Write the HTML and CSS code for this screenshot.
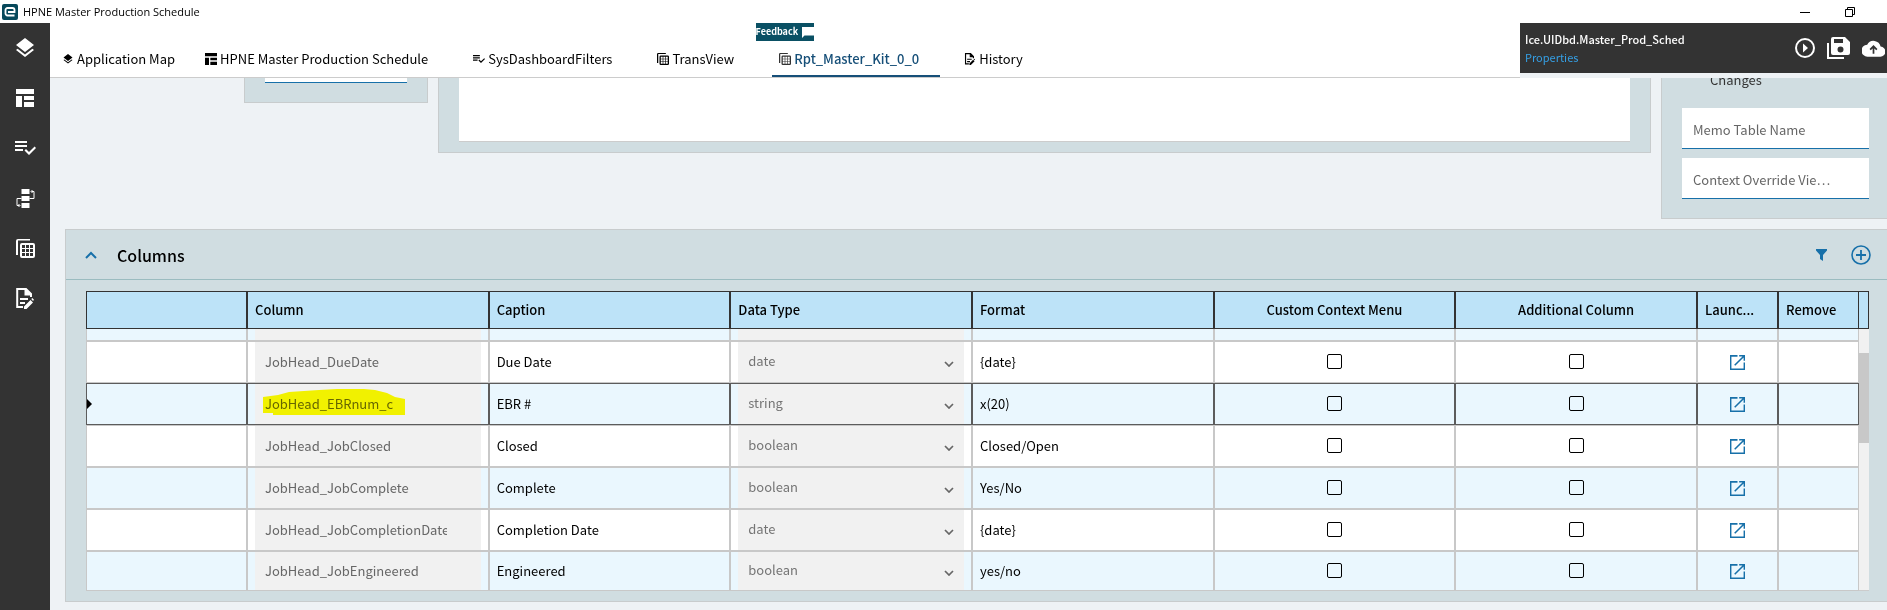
FILE: index.html
```html
<!DOCTYPE html>
<html lang="en">
<head>
<meta charset="utf-8">
<title>HPNE Master Production Schedule</title>
<link rel="stylesheet" href="styles.css">
</head>
<body>
<svg class="sprite" aria-hidden="true">
  <symbol id="i-layers" viewBox="0 0 24 24"><path d="M12 18.54l-7.37-5.73L3 14.07l9 7 9-7-1.63-1.27zM12 16l9-7-9-7-9 7z"/></symbol>
  <symbol id="i-layout" viewBox="0 0 18 18"><path d="M0 0h18v5H0zM0 7h6v11H0zM8 7h10v4H8zM8 13h10v5H8z"/></symbol>
  <symbol id="i-check-list" viewBox="0 0 21 14"><path d="M0 0h12v2H0zM0 4h12v2H0zM0 8h8v2H0zM19.600 5.500L21 7l-7 7-4.500-4.500L11 8l3 3z"/></symbol>
  <symbol id="i-flow" viewBox="0 0 18 19"><path d="M5 0h8v5H5zM5 7h8v5H5zM5 14h8v5H5z"/><path d="M13 9.500h4.500V2.500H15M16 1l-1.500 1.500L16 4M5 9.500H.500v7H3M2 15l1.500 1.500L2 18" fill="none" stroke="currentColor"/></symbol>
  <symbol id="i-grid" viewBox="0 0 19 19"><path d="M0 16V2a2 2 0 0 1 2-2h12v1.500H2V16z"/><path fill-rule="evenodd" d="M6 4h11a2 2 0 0 1 2 2v11a2 2 0 0 1-2 2H6a2 2 0 0 1-2-2V6a2 2 0 0 1 2-2zM6 6v3h3V6zM10 6v3h3V6zM14 6v3h3V6zM6 10v3h3v-3zM10 10v3h3v-3zM14 10v3h3v-3zM6 14v3h3v-3zM10 14v3h3v-3zM14 14v3h3v-3z"/></symbol>
  <symbol id="i-history" viewBox="0 0 18 21"><path d="M7 19H1.200V1H10l5 5v3M9.500 1v5.500H15" fill="none" stroke="currentColor" stroke-width="2"/><path d="M10 1v6h5zM4 10h8v2H4zM4 14h5v2H4zM8 21v-2.600l6.500-6.500 2.500 2.500-6.500 6.600zM15.300 11l1-1 1.700 1.700-1 1.200z"/></symbol>
  <symbol id="i-launch" viewBox="3 3 18 18"><path d="M19 19.300H4.700V5H12V3H3v18h18v-9h-1.700v7.300zM14 3v1.700h4l-10 10L9.300 16l10-10v4H21V3z"/></symbol>
  <symbol id="i-down" viewBox="0 0 10 6"><path d="M1 1l4 4 4-4" fill="none" stroke="currentColor" stroke-width="1.700"/></symbol>
</svg>

<header class="titlebar">
  <svg class="logo" viewBox="0 0 16 16" aria-hidden="true"><rect width="16" height="16" rx="2" fill="#07495b"/><path d="M12.500 11.500H5.500a2 2 0 0 1-2-2V6a2 2 0 0 1 2-2h5a2 2 0 0 1 2 2v2H6" fill="none" stroke="#fff" stroke-width="1.800"/></svg>
  <span class="titlebar-text">HPNE Master Production Schedule</span>
  <button class="window-button" aria-label="Minimize"><svg viewBox="0 0 10 10"><path d="M0 5.500h10" stroke="#000"/></svg></button>
  <button class="window-button" aria-label="Restore"><svg viewBox="0 0 10 10"><path d="M.500 2.500h7v7h-7zM2.500 2V.500h7v7H8" fill="none" stroke="#000"/></svg></button>
</header>

<div class="app">
  <nav class="sidebar" aria-label="Sections">
    <button aria-label="Application Map"><svg class="icon-xl"><use href="#i-layers"/></svg></button>
    <button aria-label="Layout"><svg class="icon-md"><use href="#i-layout"/></svg></button>
    <button aria-label="Rules"><svg class="icon-list"><use href="#i-check-list"/></svg></button>
    <button aria-label="Events"><svg class="icon-lg"><use href="#i-flow"/></svg></button>
    <button aria-label="Data views"><svg class="icon-lg"><use href="#i-grid"/></svg></button>
    <button aria-label="History"><svg class="icon-doc"><use href="#i-history"/></svg></button>
  </nav>

  <main class="main">
    <div class="topbar">
      <nav class="tabs" aria-label="Open pages">
        <a class="tab tab-first" href="#"><svg><use href="#i-layers"/></svg>Application Map</a>
        <a class="tab" href="#"><svg><use href="#i-layout"/></svg>HPNE Master Production Schedule</a>
        <a class="tab" href="#"><svg><use href="#i-check-list"/></svg>SysDashboardFilters</a>
        <a class="tab" href="#"><svg><use href="#i-grid"/></svg>TransView</a>
        <a class="tab tab-active" href="#" aria-current="page"><svg><use href="#i-grid"/></svg>Rpt_Master_Kit_0_0</a>
        <a class="tab" href="#"><svg><use href="#i-history"/></svg>History</a>
        <button class="feedback">Feedback<svg viewBox="0 0 12 11"><path d="M0 0h12v8.500H2.500L0 11z" fill="#fff"/></svg></button>
      </nav>
      <div class="layer-bar">
        <div class="layer-text">
          <span class="layer-name">Ice.UIDbd.Master_Prod_Sched</span>
          <a class="layer-link" href="#">Properties</a>
        </div>
        <button aria-label="Preview"><svg class="icon-play" viewBox="0 0 20 20"><circle cx="10" cy="10" r="9" fill="none" stroke="#fff" stroke-width="2"/><path d="M8 5.500v9l5-4.500z" fill="#fff"/></svg></button>
        <button aria-label="Save"><svg class="icon-save" viewBox="0 0 23 22"><path d="M1 6v15h16" fill="none" stroke="#fff" stroke-width="2"/><path fill="#fff" fill-rule="evenodd" d="M6 0h12l5 5v11a2 2 0 0 1-2 2H6a2 2 0 0 1-2-2V2a2 2 0 0 1 2-2zM7 2v4h9V2zM13.500 9.500a3 3 0 1 0 0 6 3 3 0 0 0 0-6z"/></svg></button>
        <button aria-label="Publish"><svg class="icon-cloud" viewBox="0 0 24 17"><path d="M19.400 6.500A7.500 7.500 0 0 0 5.400 4.500 6 6 0 0 0 6 17h13a5 5 0 0 0 .400-10.500z" fill="#fff"/><path d="M12 14V6.500M8.500 9.700L12 6.200l3.500 3.500" fill="none" stroke="#333" stroke-width="1.800"/></svg></button>
      </div>
    </div>

    <div class="content">
      <div class="upper">
        <section class="panel panel-small"><input class="field-tail" aria-label="Value"></section>
        <section class="panel panel-wide"><div class="canvas"></div></section>
        <section class="panel panel-side">
          <span class="side-label">Changes</span>
          <input class="field" value="Memo Table Name" aria-label="Memo Table Name">
          <input class="field" value="Context Override Vie…" aria-label="Context Override View">
        </section>
      </div>

      <section class="panel columns">
        <header class="columns-head">
          <button class="collapse" aria-label="Collapse"><svg viewBox="0 0 12 8"><path d="M1 7l5-5 5 5" fill="none" stroke="currentColor" stroke-width="2"/></svg></button>
          <h2>Columns</h2>
          <button class="filter" aria-label="Filter"><svg viewBox="0 0 11 12"><path d="M0 0h11v1.500L7 6v6l-3-2V6L0 1.500z" fill="currentColor"/></svg></button>
          <button class="add" aria-label="Add"><svg viewBox="0 0 20 20"><path d="M10 5v10M5 10h10" stroke="currentColor" stroke-width="1.800"/><circle cx="10" cy="10" r="9" fill="none" stroke="currentColor" stroke-width="1.600"/></svg></button>
        </header>
        <div class="grid">
          <table>
            <colgroup><col class="col-mark"><col><col><col><col><col><col><col class="col-action"><col class="col-action"></colgroup>
            <thead>
              <tr><th></th><th>Column</th><th>Caption</th><th>Data Type</th><th>Format</th><th class="center">Custom Context Menu</th><th class="center">Additional Column</th><th>Launc...</th><th>Remove</th></tr>
            </thead>
            <tbody>
              <tr class="row-cut"><td></td><td><div class="fill"></div></td><td></td><td><div class="fill"></div></td><td></td><td></td><td></td><td></td><td></td></tr>
              <tr>
                <td></td>
                <td><input class="cell-input" value="JobHead_DueDate" disabled aria-label="Column"></td>
                <td>Due Date</td>
                <td><div class="pick"><select disabled aria-label="Data Type"><option>date</option></select><svg><use href="#i-down"/></svg></div></td>
                <td>{date}</td>
                <td class="center"><input type="checkbox" aria-label="Custom Context Menu"></td>
                <td class="center"><input type="checkbox" aria-label="Additional Column"></td>
                <td class="center"><a class="launch" href="#" aria-label="Launch"><svg><use href="#i-launch"/></svg></a></td>
                <td></td>
              </tr>
              <tr class="row-selected">
                <td><svg class="marker" viewBox="0 0 5 10"><path d="M0 0l5 5-5 5z"/></svg></td>
                <td><div class="marked"><input class="cell-input" value="JobHead_EBRnum_c" disabled aria-label="Column"><svg class="highlight" viewBox="0 0 142 26"><path d="M0 8L15 6l11-3 30-2 18-1h27l11 1 12 3 8 4 10 2v16H10v-2H0z" fill="#ff0"/></svg></div></td>
                <td>EBR #</td>
                <td><div class="pick"><select disabled aria-label="Data Type"><option>string</option></select><svg><use href="#i-down"/></svg></div></td>
                <td>x(20)</td>
                <td class="center"><input type="checkbox" aria-label="Custom Context Menu"></td>
                <td class="center"><input type="checkbox" aria-label="Additional Column"></td>
                <td class="center"><a class="launch" href="#" aria-label="Launch"><svg><use href="#i-launch"/></svg></a></td>
                <td></td>
              </tr>
              <tr>
                <td></td>
                <td><input class="cell-input" value="JobHead_JobClosed" disabled aria-label="Column"></td>
                <td>Closed</td>
                <td><div class="pick"><select disabled aria-label="Data Type"><option>boolean</option></select><svg><use href="#i-down"/></svg></div></td>
                <td>Closed/Open</td>
                <td class="center"><input type="checkbox" aria-label="Custom Context Menu"></td>
                <td class="center"><input type="checkbox" aria-label="Additional Column"></td>
                <td class="center"><a class="launch" href="#" aria-label="Launch"><svg><use href="#i-launch"/></svg></a></td>
                <td></td>
              </tr>
              <tr>
                <td></td>
                <td><input class="cell-input" value="JobHead_JobComplete" disabled aria-label="Column"></td>
                <td>Complete</td>
                <td><div class="pick"><select disabled aria-label="Data Type"><option>boolean</option></select><svg><use href="#i-down"/></svg></div></td>
                <td>Yes/No</td>
                <td class="center"><input type="checkbox" aria-label="Custom Context Menu"></td>
                <td class="center"><input type="checkbox" aria-label="Additional Column"></td>
                <td class="center"><a class="launch" href="#" aria-label="Launch"><svg><use href="#i-launch"/></svg></a></td>
                <td></td>
              </tr>
              <tr>
                <td></td>
                <td><input class="cell-input" value="JobHead_JobCompletionDate" disabled aria-label="Column"></td>
                <td>Completion Date</td>
                <td><div class="pick"><select disabled aria-label="Data Type"><option>date</option></select><svg><use href="#i-down"/></svg></div></td>
                <td>{date}</td>
                <td class="center"><input type="checkbox" aria-label="Custom Context Menu"></td>
                <td class="center"><input type="checkbox" aria-label="Additional Column"></td>
                <td class="center"><a class="launch" href="#" aria-label="Launch"><svg><use href="#i-launch"/></svg></a></td>
                <td></td>
              </tr>
              <tr class="row-last">
                <td></td>
                <td><input class="cell-input" value="JobHead_JobEngineered" disabled aria-label="Column"></td>
                <td>Engineered</td>
                <td><div class="pick"><select disabled aria-label="Data Type"><option>boolean</option></select><svg><use href="#i-down"/></svg></div></td>
                <td>yes/no</td>
                <td class="center"><input type="checkbox" aria-label="Custom Context Menu"></td>
                <td class="center"><input type="checkbox" aria-label="Additional Column"></td>
                <td class="center"><a class="launch" href="#" aria-label="Launch"><svg><use href="#i-launch"/></svg></a></td>
                <td></td>
              </tr>
            </tbody>
          </table>
          <div class="scroll">
            <div class="scroll-head"></div>
            <div class="scroll-track"><div class="scroll-thumb"></div></div>
          </div>
        </div>
      </section>
    </div>
  </main>
</div>
</body>
</html>
```
FILE: styles.css
```css
* { box-sizing: border-box; }

html, body { height: 100%; }

body {
  margin: 0;
  display: flex;
  flex-direction: column;
  overflow: hidden;
  background: #fff;
  color: #000;
  font-family: "Noto Sans CJK SC", "Open Sans", sans-serif;
  font-size: 13px;
  line-height: 20px;
}

button, input, select { font: inherit; color: inherit; }
button { margin: 0; padding: 0; border: 0; background: none; }
a { color: inherit; text-decoration: none; }
svg { display: block; fill: currentColor; }
.sprite { position: absolute; width: 0; height: 0; }

/* Window title */
.titlebar {
  display: flex;
  align-items: center;
  height: 23px;
  padding: 0 15px 0 2px;
  font-family: "Open Sans", sans-serif;
  font-size: 11px;
}
.logo { width: 16px; height: 16px; }
.titlebar-text { flex: 1; margin-left: 5px; }
.window-button { display: grid; place-items: center; width: 45px; height: 20px; }
.window-button svg { width: 10px; height: 10px; }

/* Side navigation */
.app { flex: 1; display: flex; min-height: 0; }
.sidebar { width: 50px; flex: none; background: #333; color: #fff; }
.sidebar button { display: grid; place-items: center; width: 50px; height: 50px; }
.icon-xl { width: 24px; height: 24px; }
.icon-lg { width: 19px; height: 19px; }
.icon-md { width: 18px; height: 18px; }
.icon-list { width: 21px; height: 14px; }
.icon-doc { width: 18px; height: 21px; }

/* Tabs */
.main { flex: 1; min-width: 0; overflow: hidden; background: #eef2f5; }
.topbar { display: flex; align-items: flex-start; }
.tabs {
  position: relative;
  flex: 1;
  display: flex;
  gap: 17px;
  height: 55px;
  padding: 0 5px;
  background: #fff;
  border-bottom: 1px solid #ccc;
}
.tab {
  display: flex;
  align-items: center;
  gap: 3px;
  padding: 20px 21px 0 7px;
  border-bottom: 2px solid transparent;
  white-space: nowrap;
}
.tab svg { width: 12px; height: 12px; }
.tab-first { padding-right: 6px; }
.tab-active { color: #164f78; font-weight: 500; border-color: #164f78; }
.tab-active svg { color: #333; }
.feedback {
  position: absolute;
  top: 0;
  left: 48%;
  display: flex;
  align-items: center;
  gap: 4px;
  height: 18px;
  background: #0a5064;
  color: #fff;
  font-size: 9px;
  font-weight: 700;
}
.feedback svg { width: 12px; height: 11px; }

/* Layer toolbar */
.layer-bar {
  display: flex;
  align-items: center;
  gap: 12px;
  width: 367px;
  height: 50px;
  padding: 0 2px 0 5px;
  background: #333;
  color: #fff;
  font-size: 11px;
  line-height: 18px;
}
.layer-text { flex: 1; display: flex; flex-direction: column; }
.layer-name { font-weight: 500; }
.layer-link { color: #35a0e6; }
.icon-play { width: 20px; height: 20px; }
.icon-save { width: 23px; height: 22px; }
.icon-cloud { width: 23px; height: 17px; }

/* Panels */
.content { margin-right: -3px; padding-left: 15px; }
.upper {
  display: grid;
  grid-template-columns: 169px 184px 1fr 229px;
  gap: 10px;
  align-items: start;
  margin-bottom: 10px;
}
.panel { background: #d0dde1; border: 1px solid #c8cccd; }
.upper .panel { border-top: 0; }
.panel-small { grid-column: 2; padding: 0 20px 19px; }
.field-tail {
  display: block;
  width: 100%;
  height: 5px;
  padding: 0;
  border: 0;
  border-bottom: 1px solid #1770a9;
  background: #fff;
}
.panel-wide { padding: 0 20px 10px; }
.canvas { height: 64px; background: #fff; border-bottom: 1px solid #ccc; }
.panel-side {
  display: flex;
  flex-direction: column;
  gap: 9px;
  padding: 0 20px 19px;
  overflow: hidden;
}
.side-label { margin: -8px 0 9px 28px; color: #333; }
.field {
  width: 100%;
  height: 41px;
  padding: 3px 11px 0;
  border: 0;
  border-bottom: 1px solid #1770a9;
  background: #fff;
  color: #666;
}

/* Columns panel */
.columns-head {
  display: flex;
  align-items: center;
  height: 50px;
  padding: 0 18px 0 19px;
  border-bottom: 1px solid #9bbcc0;
  color: #1770a9;
}
.columns-head h2 { flex: 1; margin: 0 0 0 20px; color: #000; font-size: 16px; font-weight: 500; line-height: 24px; }
.collapse svg { width: 12px; height: 8px; }
.filter svg { width: 11px; height: 12px; }
.add { margin-left: 24px; }
.add svg { width: 20px; height: 20px; }
.grid { display: flex; padding: 11px 20px 10px; }

table {
  flex: 1;
  min-width: 0;
  width: 100%;
  table-layout: fixed;
  border-collapse: separate;
  border-spacing: 0;
}
.col-mark { width: 161px; }
.col-action { width: 81px; }
th, td { padding: 0 7px; text-align: left; white-space: nowrap; overflow: hidden; }
th { height: 38px; border: 1px solid #333; background: #bde3f8; font-weight: 500; }
td { height: 42px; border: 1px solid #c8c8c8; background: #fff; }
tbody tr:nth-child(odd) td { background: #eaf7fe; }
.center { text-align: center; }
td.center { padding-bottom: 2px; }

.row-cut td { height: 12px; border-top: 0; }
.fill { height: 11px; background: #f1f1f1; }
tbody .row-selected td { border-color: #5c5c5c; background: #eaf7fe; }
.row-selected td:first-child { padding-left: 0; }
.row-last td { height: 40px; }
tbody tr:nth-child(4) td, tbody tr:nth-child(6) td { background: #fff; }
tbody tr:nth-child(5) td, tbody tr:nth-child(7) td { background: #eaf7fe; }

.cell-input, .pick select {
  display: block;
  width: 100%;
  height: 40px;
  border: 0;
  border-radius: 0;
  background: #f1f1f1;
  color: #666;
  opacity: 1;
}
.cell-input { padding: 0 34px 2px 10px; }
.row-last .cell-input, .row-last select { height: 38px; }
.pick { display: grid; align-items: center; color: #666; }
.pick select { grid-area: 1 / 1; appearance: none; padding: 0 10px 2px; color: #757575; }
.pick svg { grid-area: 1 / 1; justify-self: end; width: 10px; height: 6px; margin: 4px 10px 0 0; }
.marker { width: 5px; height: 10px; }
.marked { position: relative; }
.highlight { position: absolute; top: 5px; left: 8px; width: 142px; height: 26px; mix-blend-mode: multiply; }

input[type="checkbox"] {
  appearance: none;
  display: block;
  width: 15px;
  height: 15px;
  margin: 0 auto;
  border: 1px solid #000;
  border-radius: 2px;
  background: transparent;
}
.launch { display: inline-block; vertical-align: middle; color: #1770a9; }
.launch svg { width: 15px; height: 15px; }

/* Grid scrollbar */
.scroll { display: flex; flex-direction: column; width: 10px; flex: none; }
.scroll-head { height: 38px; border: 1px solid #333; border-left: 0; background: #bde3f8; }
.scroll-track { flex: 1; padding-top: 24px; background: #f1f1f1; border-bottom: 1px solid #ccc; }
.scroll-thumb { height: 90px; background: #c8c8c8; }
```
